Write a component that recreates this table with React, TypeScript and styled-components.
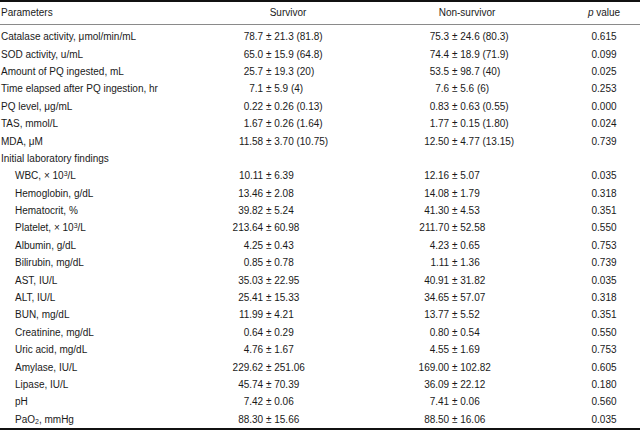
import React from 'react';
import styled, { createGlobalStyle } from 'styled-components';

const Global = createGlobalStyle`
  html, body { margin: 0; padding: 0; background: #fff; }
  body { font-family: "Liberation Sans", Arial, sans-serif; color: #1a1a1a; }
`;

const Table = styled.div`
  width: 640px;
  border-top: 2px solid #111;
  border-bottom: 2px solid #111;
  font-size: 10px;
  line-height: 1;
`;

const Row = styled.div<{ $header?: boolean }>`
  display: grid;
  grid-template-columns: 200px 176px 182px 82px;
  align-items: center;
  height: ${(p) => (p.$header ? '22px' : '17.4px')};
  ${(p) => (p.$header ? 'border-bottom: 1px solid #8a8a8a;' : '')}
`;

const Body = styled.div`
  padding-top: 3.5px;
`;

const ParamCell = styled.div<{ $indent?: boolean }>`
  padding-left: ${(p) => (p.$indent ? '15px' : '1px')};
  white-space: nowrap;
`;

const HeadCell = styled.div<{ $center?: boolean }>`
  text-align: ${(p) => (p.$center ? 'center' : 'left')};
  padding-left: ${(p) => (p.$center ? '0' : '1px')};
  white-space: nowrap;
`;

const StatCell = styled.div`
  display: flex;
  white-space: pre;
`;

const Mean = styled.span<{ $w: number }>`
  display: inline-block;
  width: ${(p) => p.$w}px;
  text-align: right;
  flex: none;
`;

const PCell = styled.div`
  text-align: center;
  padding-left: 10px;
`;

const PHead = styled(PCell)``;

const Ital = styled.i`
  font-style: italic;
`;

const Sup = styled.sup`
  font-size: 7px;
  vertical-align: 3.5px;
  line-height: 0;
`;

const Sub = styled.sub`
  font-size: 7px;
  vertical-align: -1px;
  line-height: 0;
`;

type R = { label: React.ReactNode; s?: string; n?: string; p?: string; indent?: boolean };

const X10 = (name: string) => (
  <>
    {name}, {'\u00d7'} 10<Sup>3</Sup>/L
  </>
);

const rows: R[] = [
  { label: 'Catalase activity, μmol/min/mL', s: '78.7 ± 21.3 (81.8)', n: '75.3 ± 24.6 (80.3)', p: '0.615' },
  { label: 'SOD activity, u/mL', s: '65.0 ± 15.9 (64.8)', n: '74.4 ± 18.9 (71.9)', p: '0.099' },
  { label: 'Amount of PQ ingested, mL', s: '25.7 ± 19.3 (20)', n: '53.5 ± 98.7 (40)', p: '0.025' },
  { label: 'Time elapsed after PQ ingestion, hr', s: '7.1 ± 5.9 (4)', n: '7.6 ± 5.6 (6)', p: '0.253' },
  { label: 'PQ level, μg/mL', s: '0.22 ± 0.26 (0.13)', n: '0.83 ± 0.63 (0.55)', p: '0.000' },
  { label: 'TAS, mmol/L', s: '1.67 ± 0.26 (1.64)', n: '1.77 ± 0.15 (1.80)', p: '0.024' },
  { label: 'MDA, μM', s: '11.58 ± 3.70 (10.75)', n: '12.50 ± 4.77 (13.15)', p: '0.739' },
  { label: 'Initial laboratory findings' },
  { label: X10('WBC'), s: '10.11 ± 6.39', n: '12.16 ± 5.07', p: '0.035', indent: true },
  { label: 'Hemoglobin, g/dL', s: '13.46 ± 2.08', n: '14.08 ± 1.79', p: '0.318', indent: true },
  { label: 'Hematocrit, %', s: '39.82 ± 5.24', n: '41.30 ± 4.53', p: '0.351', indent: true },
  { label: X10('Platelet'), s: '213.64 ± 60.98', n: '211.70 ± 52.58', p: '0.550', indent: true },
  { label: 'Albumin, g/dL', s: '4.25 ± 0.43', n: '4.23 ± 0.65', p: '0.753', indent: true },
  { label: 'Bilirubin, mg/dL', s: '0.85 ± 0.78', n: '1.11 ± 1.36', p: '0.739', indent: true },
  { label: 'AST, IU/L', s: '35.03 ± 22.95', n: '40.91 ± 31.82', p: '0.035', indent: true },
  { label: 'ALT, IU/L', s: '25.41 ± 15.33', n: '34.65 ± 57.07', p: '0.318', indent: true },
  { label: 'BUN, mg/dL', s: '11.99 ± 4.21', n: '13.77 ± 5.52', p: '0.351', indent: true },
  { label: 'Creatinine, mg/dL', s: '0.64 ± 0.29', n: '0.80 ± 0.54', p: '0.550', indent: true },
  { label: 'Uric acid, mg/dL', s: '4.76 ± 1.67', n: '4.55 ± 1.69', p: '0.753', indent: true },
  { label: 'Amylase, IU/L', s: '229.62 ± 251.06', n: '169.00 ± 102.82', p: '0.605', indent: true },
  { label: 'Lipase, IU/L', s: '45.74 ± 70.39', n: '36.09 ± 22.12', p: '0.180', indent: true },
  { label: 'pH', s: '7.42 ± 0.06', n: '7.41 ± 0.06', p: '0.560', indent: true },
  {
    label: (
      <>
        PaO<Sub>2</Sub>, mmHg
      </>
    ),
    s: '88.30 ± 15.66',
    n: '88.50 ± 16.06',
    p: '0.035',
    indent: true,
  },
];

const Stat = ({ v, w }: { v?: string; w: number }) => {
  if (!v) return <StatCell />;
  const [m, rest] = v.split(' ± ');
  return (
    <StatCell>
      <Mean $w={w}>{m}</Mean>
      {' ± ' + rest}
    </StatCell>
  );
};

export default function App() {
  return (
    <>
      <Global />
      <Table>
        <Row $header>
          <HeadCell>Parameters</HeadCell>
          <HeadCell $center>Survivor</HeadCell>
          <HeadCell $center>Non-survivor</HeadCell>
          <PHead>
            <Ital>p</Ital> value
          </PHead>
        </Row>
        <Body>
          {rows.map((r, i) => (
            <Row key={i}>
              <ParamCell $indent={r.indent}>{r.label}</ParamCell>
              <Stat v={r.s} w={63.2} />
              <Stat v={r.n} w={73.2} />
              <PCell>{r.p}</PCell>
            </Row>
          ))}
        </Body>
      </Table>
    </>
  );
}
